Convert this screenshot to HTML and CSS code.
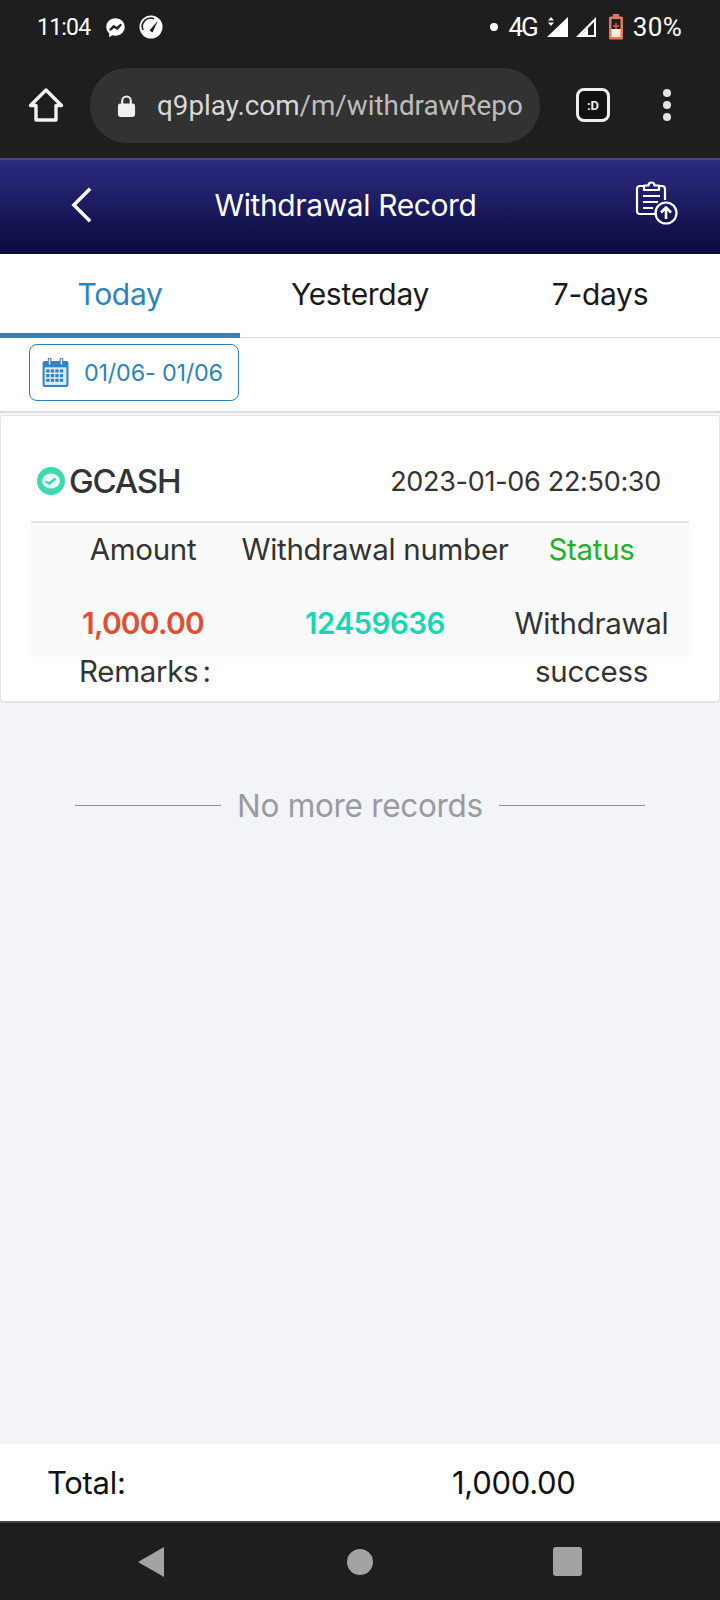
FILE: index.html
```html
<!DOCTYPE html>
<html lang="en">
<head>
<meta charset="utf-8">
<title>Withdrawal Record</title>
<link rel="stylesheet" href="styles.css">
</head>
<body>
<div class="phone">
  <div class="status">
    <div class="status-left">
      <span class="time">11:04</span>
      <svg class="st-icon" viewBox="0 0 24 24"><path fill="#fff" d="M12 1.500C6 1.500 1.500 5.900 1.500 11.500c0 3 1.200 5.500 3.300 7.300V23l3.800-2.100c1.100.3 2.200.5 3.400.5 6 0 10.500-4.400 10.500-9.900S18 1.500 12 1.500z"/><path fill="none" stroke="#1e1e1e" stroke-width="2.200" stroke-linejoin="round" d="M6 14.500l4-4.300 3 2.700 5-3.900-4 4.500-3-2.700z"/></svg>
      <svg class="st-icon gauge" viewBox="0 0 24 24"><circle cx="12" cy="12" r="11.500" fill="#fff"/><path fill="none" stroke="#1e1e1e" stroke-width="1.600" d="M4 15a8.500 8.500 0 0 1 11-11.300"/><path fill="#1e1e1e" d="M10.500 15.500L19 5.500l-5.500 12z"/></svg>
    </div>
    <div class="status-right">
      <span class="dot"></span>
      <span class="net">4G</span>
      <svg class="sig-a" viewBox="0 0 22 20"><path fill="#fff" d="M22 0v20H1z"/><path fill="#fff" d="M5 0l3 3.500H2zM5 9L2 5.500h6z"/></svg>
      <svg class="sig-b" viewBox="0 0 20 20"><path fill="#fff" fill-rule="evenodd" d="M20 0v20H0zM18 5L5 18h13z"/><path fill="#fff" d="M12 11l-7 7h7z"/></svg>
      <svg class="batt" viewBox="0 0 16 26"><rect x="5" y="0" width="6" height="3" fill="#e07a5a"/><rect x="1" y="2.500" width="14" height="23" rx="1.500" fill="#e07a5a"/><rect x="3.500" y="5" width="9" height="10" fill="#1e1e1e"/><rect x="3.500" y="15" width="9" height="8" fill="#fbe9e2"/><path fill="#d8442a" d="M7 9h2v2h2v2H9v2H7v-2H5v-2h2z"/></svg>
      <span class="pct">30%</span>
    </div>
  </div>

  <div class="toolbar">
    <svg class="home" viewBox="0 0 36 36"><path fill="none" stroke="#f2f2f2" stroke-width="3.400" stroke-linejoin="round" d="M18 3L2.500 18.500H8V33h20V18.500h5.500z"/></svg>
    <div class="url">
      <svg class="lock" viewBox="0 0 20 24"><path fill="none" stroke="#f0f0f0" stroke-width="2.200" d="M5.500 11V7a4.500 4.500 0 0 1 9 0v4"/><rect x="1" y="10" width="18" height="14" rx="2.500" fill="#f0f0f0"/></svg>
      <span class="url-text"><span class="url-host">q9play.com</span>/m/withdrawRepo</span>
    </div>
    <div class="tab-count">:D</div>
    <div class="kebab"><i></i><i></i><i></i></div>
  </div>

  <header class="head">
    <svg class="back" viewBox="0 0 24 38"><path fill="none" stroke="#fff" stroke-width="3.600" d="M21 2L4 19l17 17"/></svg>
    <h1 class="title">Withdrawal Record</h1>
    <svg class="report" viewBox="0 0 44 44"><g fill="none" stroke="#fff" stroke-width="2.200" stroke-linejoin="round"><path d="M23 33H6a3 3 0 0 1-3-3V8a3 3 0 0 1 3-3h4M25 5h3a3 3 0 0 1 3 3v11"/><path d="M10 4.500h4.500a3 3 0 0 1 6 0H25V9H10z"/><path d="M9 15h17M9 21h15M9 27h10"/><circle cx="32" cy="32" r="10.500"/><path d="M32 38V27M27 31.500l5-5 5 5" stroke-width="2.600"/></g></svg>
  </header>

  <nav class="tabs">
    <div class="tab active">Today</div>
    <div class="tab">Yesterday</div>
    <div class="tab">7-days</div>
  </nav>

  <div class="filter">
    <div class="date-btn">
      <svg class="cal" viewBox="0 0 26 28"><rect x="0.500" y="3" width="25" height="25" rx="2" fill="#2f83c0"/><rect x="2.500" y="9" width="21" height="17" fill="#dcebf6"/><g fill="#2f83c0"><rect x="4" y="11" width="3.200" height="3"/><rect x="8.400" y="11" width="3.200" height="3"/><rect x="12.800" y="11" width="3.200" height="3"/><rect x="17.200" y="11" width="3.200" height="3"/><rect x="4" y="15.500" width="3.200" height="3"/><rect x="8.400" y="15.500" width="3.200" height="3"/><rect x="12.800" y="15.500" width="3.200" height="3"/><rect x="17.200" y="15.500" width="3.200" height="3"/><rect x="4" y="20" width="3.200" height="3"/><rect x="8.400" y="20" width="3.200" height="3"/><rect x="12.800" y="20" width="3.200" height="3"/><rect x="17.200" y="20" width="3.200" height="3"/></g><rect x="6" y="0" width="2.600" height="7" rx="1.300" fill="#dcebf6" stroke="#2f83c0"/><rect x="17.400" y="0" width="2.600" height="7" rx="1.300" fill="#dcebf6" stroke="#2f83c0"/></svg>
      <span>01/06- 01/06</span>
    </div>
  </div>

  <main class="content">
    <section class="card">
      <div class="card-top">
        <div class="brand">
          <svg class="gcash" viewBox="0 0 28 28"><circle cx="14" cy="14" r="14" fill="#3fd9b0"/><ellipse cx="14" cy="14" rx="9" ry="7.500" fill="#eafaf5"/><path fill="none" stroke="#3fd9b0" stroke-width="2.400" d="M8.500 14.500l4 2 6-5"/></svg>
          <span>GCASH</span>
        </div>
        <span class="stamp">2023-01-06 22:50:30</span>
      </div>
      <div class="grid">
        <div class="cell">Amount</div>
        <div class="cell">Withdrawal number</div>
        <div class="cell green">Status</div>
        <div class="cell val red">1,000.00</div>
        <div class="cell val teal">12459636</div>
        <div class="val-plain">Withdrawal success</div>
      </div>
      <div class="remarks">Remarks :</div>
    </section>

    <div class="nomore">
      <span class="rule"></span>
      <span class="nomore-text">No more records</span>
      <span class="rule"></span>
    </div>
  </main>

  <div class="total">
    <span class="total-label">Total:</span>
    <span class="total-val">1,000.00</span>
  </div>

  <div class="navbar">
    <svg class="nav-back" viewBox="0 0 28 32"><path fill="#a3a3a3" d="M27 1v30L1 16z"/></svg>
    <span class="nav-home"></span>
    <span class="nav-recent"></span>
  </div>
</div>
</body>
</html>
```

FILE: styles.css
```css
* { box-sizing: border-box; margin: 0; padding: 0; }
html, body { width: 720px; height: 1600px; overflow: hidden; }
body { font-family: Inter, "Liberation Sans", sans-serif; background: #f3f4f8; color: #333; }
.phone { width: 720px; height: 1600px; display: flex; flex-direction: column; }

.status { height: 60px; background: #1e1e1e; color: #fff; display: flex; justify-content: space-between; align-items: center; padding: 0 38px 6px 37px; font-family: Roboto, sans-serif; }
.status-left { display: flex; align-items: center; }
.time { font-size: 23px; letter-spacing: -0.800px; margin-right: 15px; }
.st-icon { width: 21px; height: 21px; margin-right: 13px; }
.gauge { width: 24px; height: 24px; margin-right: 0; }
.status-right { display: flex; align-items: center; }
.dot { width: 8px; height: 8px; border-radius: 50%; background: #fff; margin-right: 11px; }
.net { font-size: 26px; font-weight: 400; letter-spacing: -2px; margin-right: 9px; }
.sig-a { width: 22px; height: 20px; margin-right: 8px; }
.sig-b { width: 20px; height: 20px; margin-right: 12px; }
.batt { width: 16px; height: 26px; margin-right: 9px; }
.pct { font-size: 26px; letter-spacing: 0.300px; }

.toolbar { height: 98px; background: #1e1e1e; display: flex; align-items: center; padding: 0 0 8px 28px; }
.home { width: 36px; height: 36px; margin-right: 26px; flex: none; }
.url { width: 450px; height: 75px; background: #323232; border-radius: 37px; display: flex; align-items: center; padding-left: 27px; flex: none; overflow: hidden; }
.lock { width: 19px; height: 23px; margin-right: 21px; flex: none; }
.url-text { font-family: Roboto, sans-serif; font-size: 27.800px; color: #bdbdbd; white-space: nowrap; }
.url-host { color: #d8d8d8; }
.tab-count { width: 34px; height: 34px; margin-left: 36px; border: 3px solid #eee; border-radius: 8px; background: #111; color: #eee; font: 700 13px Roboto, sans-serif; display: flex; align-items: center; justify-content: center; flex: none; }
.kebab { margin-left: 53px; display: flex; flex-direction: column; gap: 4px; }
.kebab i { display: block; width: 8px; height: 8px; border-radius: 50%; background: #e4e4e4; }

.head { height: 96px; border-top: 2px solid #4a4a78; background: linear-gradient(#2b2b80, #232370 25%, #0a0a3c 100%); display: flex; align-items: center; padding: 0 42px 0 70px; }
.back { width: 23px; height: 38px; margin-bottom: 4px; flex: none; }
.title { flex: 1; text-align: center; padding-right: 36px; margin-bottom: 4px; font-size: 30px; font-weight: 400; color: #fff; letter-spacing: -0.400px; }
.report { width: 44px; height: 44px; margin-bottom: 8px; flex: none; }

.tabs { height: 84px; background: #fff; display: grid; grid-template-columns: repeat(3, 240px); border-bottom: 1px solid #ddd; }
.tab { font-size: 30px; color: #1a1a1a; display: flex; align-items: center; justify-content: center; letter-spacing: -0.300px; padding-bottom: 4px; }
.tab.active { color: #2f83c0; border-bottom: 5px solid #2f83c0; margin-bottom: -1px; padding-bottom: 0; }

.filter { height: 75px; background: #fff; border-bottom: 2px solid #ddd; padding: 6px 0 0 29px; }
.date-btn { width: 210px; height: 57px; border: 1px solid #2f7fb5; border-radius: 8px; display: flex; align-items: center; padding-left: 12px; color: #2f83c0; font-size: 23.400px; letter-spacing: -0.200px; }
.cal { width: 27px; height: 29px; margin-right: 15px; }

.content { flex: 1; display: flex; flex-direction: column; }
.card { margin-top: 2px; height: 288px; background: #fff; border: 1px solid #e4e4e4; border-bottom-width: 2px; border-radius: 4px; }
.card-top { height: 105px; padding: 25px 58px 0 36px; display: flex; justify-content: space-between; align-items: center; }
.brand { display: flex; align-items: center; font-size: 33px; font-weight: 500; letter-spacing: -1.200px; color: #333; }
.gcash { width: 28px; height: 28px; margin-right: 4px; }
.stamp { font-size: 27px; letter-spacing: -0.300px; color: #333; }
.grid { margin: 0 30px; height: 136px; background: #fafafa; border-top: 2px solid #e2e2e2; display: grid; grid-template-columns: 224px 240px 193px; grid-template-rows: 52px 24px 48px; font-size: 29.500px; letter-spacing: -0.300px; line-height: 52px; text-align: center; }
.cell { display: flex; justify-content: center; white-space: nowrap; }
.val, .val-plain { grid-row: 3; line-height: 48px; }
.green { color: #1fb02c; }
.red { color: #e04f33; font-size: 30px; font-weight: 600; letter-spacing: -0.800px; }
.teal { color: #18d6b4; font-weight: 600; letter-spacing: -0.500px; }
.remarks { margin-left: 78px; font-size: 29.500px; line-height: 28px; letter-spacing: -0.300px; word-spacing: -4px; }

.nomore { margin-top: 83px; display: flex; align-items: center; justify-content: center; gap: 16px; }
.rule { width: 146px; height: 1px; background: #8e8e98; }
.nomore-text { font-size: 31.500px; color: #9a9aa2; letter-spacing: -0.300px; }

.total { height: 77px; background: #fff; display: flex; align-items: center; color: #111; font-size: 31px; letter-spacing: -0.300px; }
.total-label { width: 452px; padding-left: 47px; }

.navbar { height: 79px; background: #1e1e1e; border-top: 2px solid #444; display: flex; align-items: center; }
.nav-back { width: 28px; height: 32px; margin-left: 137px; }
.nav-home { width: 26px; height: 26px; border-radius: 50%; background: #a3a3a3; margin-left: 182px; }
.nav-recent { width: 29px; height: 29px; border-radius: 3px; background: #a3a3a3; margin-left: 180px; }
```
